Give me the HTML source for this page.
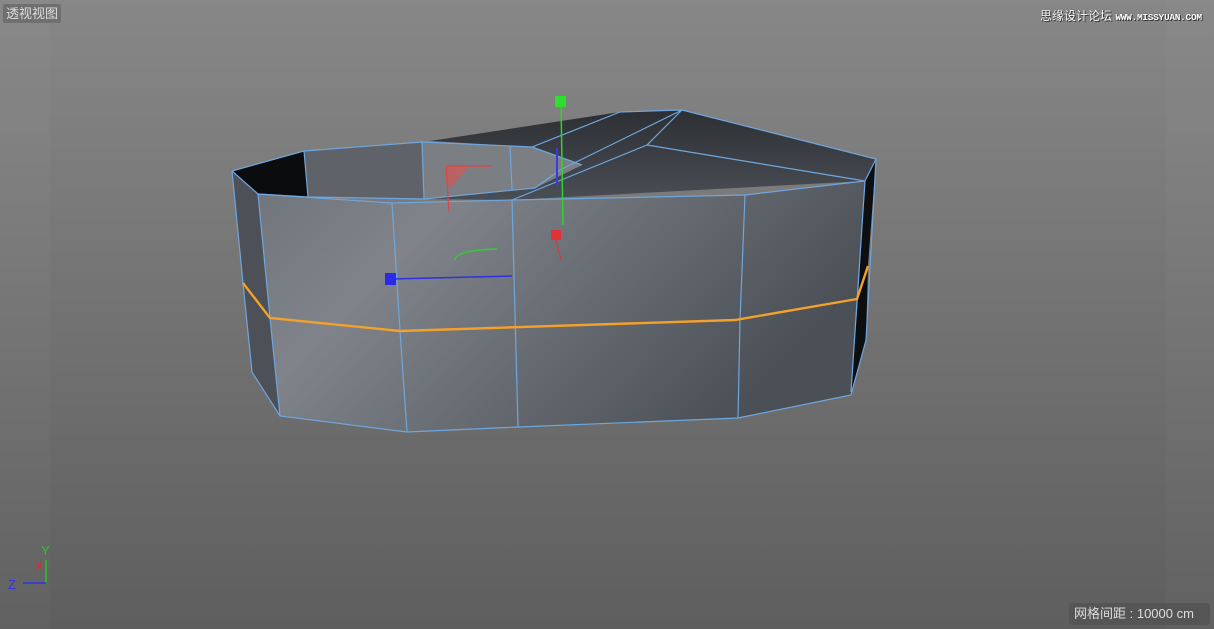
<!DOCTYPE html>
<html><head><meta charset="utf-8"><style>
html,body{margin:0;padding:0}
body{width:1214px;height:629px;overflow:hidden;position:relative;background:linear-gradient(#878787,#5e5e5e);font-family:"Liberation Sans","Noto Sans CJK SC",sans-serif}
.lp{position:absolute;left:0;top:0;width:50px;height:629px;background:rgba(255,255,255,0.025)}
.rp{position:absolute;right:0;top:0;width:48px;height:629px;background:rgba(255,255,255,0.025)}
.tl{position:absolute;left:3px;top:4px;padding:0 3px;height:19px;line-height:19px;font-size:13px;color:#ddd;background:#6f6f6f;border-radius:2px}
.wm{position:absolute;left:1040px;top:7px;font-size:12px;color:#fff;text-shadow:0 0 1px #333,1px 1px 0 #333;letter-spacing:0}
.wm span{font-family:"Liberation Mono",monospace;font-size:9.5px;font-weight:bold;letter-spacing:-0.3px}
.br{position:absolute;left:1069px;top:603px;width:141px;height:22px;line-height:22px;background:#555;border-radius:3px;color:#ddd;font-size:13px;padding-left:5px;box-sizing:border-box}
svg{position:absolute;left:0;top:0}
</style></head><body>
<div class="lp"></div><div class="rp"></div>
<svg width="1214" height="629">
<defs>
<linearGradient id="fr" x1="0" y1="0" x2="1" y2="0.4">
<stop offset="0" stop-color="#70747b"/><stop offset="0.3" stop-color="#80848a"/><stop offset="0.7" stop-color="#61656c"/><stop offset="1" stop-color="#4b4f56"/></linearGradient>
<linearGradient id="tp" x1="0" y1="0" x2="0" y2="1"><stop offset="0" stop-color="#2c2f33"/><stop offset="1" stop-color="#4a4e55"/></linearGradient>
</defs>
<polygon points="430,141 620,112 682,110 876,159 865,181 512,200 424,199 535,188 582,165 532,147" fill="url(#tp)"/>
<polygon points="422,142 510,146 532,147 582,165 535,188 424,199" fill="#7b7e83"/>
<polygon points="304,151 422,142 424,199 308,197" fill="#5f6369"/>
<polygon points="232,171 304,151 308,197 258,194" fill="#0b0c0d"/>
<polygon points="232,171 258,194 270,318 280,416 252,372 243,283" fill="#4d5157"/>
<polygon points="258,194 392,203 512,200 745,195 865,181 858,299 851,395 738,418 518,427 407,432 280,416 270,318" fill="url(#fr)"/>
<polygon points="876,159 865,181 858,299 851,392 866,340 868,265" fill="#0d0e10"/>
<g stroke="#6fa6de" stroke-width="1.2" fill="none">
<polyline points="232,171 304,151 422,142 510,146 532,147 620,112 682,110 876,159 865,181 745,195 512,200 392,203 258,194 232,171"/>
<polyline points="258,194 308,197 424,199 535,188"/>
<line x1="304" y1="151" x2="308" y2="197"/><line x1="422" y1="142" x2="424" y2="199"/><line x1="510" y1="146" x2="512" y2="190"/>
<polyline points="532,147 582,165"/><polyline points="682,110 647,145 512,200"/><polyline points="647,145 865,181"/><polyline points="682,110 560,170 535,188"/>
<polyline points="232,171 243,283 252,372 280,416 407,432 518,427 738,418 851,395 866,340 876,159"/>
<polyline points="258,194 270,318 280,416"/><polyline points="392,203 400,331 407,432"/><polyline points="512,200 518,427"/><polyline points="745,195 740,320 738,418"/><line x1="865" y1="181" x2="851" y2="392"/>
</g>
<polyline points="243,283 270,318 400,331 735,320 857,299 868,266" stroke="#f3a12a" stroke-width="2.4" fill="none"/>
<polygon points="446,166 469,166 449,190" fill="rgba(225,80,80,0.6)"/>
<polyline points="492,166 446,166 449,212" stroke="#e04545" stroke-width="1.2" fill="none"/>
<line x1="561" y1="102" x2="563" y2="225" stroke="#2ed52e" stroke-width="1.5"/>
<rect x="555" y="96" width="11" height="11" fill="#2ee02e"/>
<line x1="557" y1="148" x2="557" y2="186" stroke="#3a3ae0" stroke-width="2"/>
<rect x="551" y="230" width="10" height="10" fill="#e03333"/>
<line x1="556" y1="240" x2="561" y2="260" stroke="#e03333" stroke-width="1"/>
<line x1="391" y1="279" x2="512" y2="276" stroke="#3030e0" stroke-width="1.5"/>
<rect x="385" y="273" width="11" height="12" fill="#2a2ae8"/>
<path d="M455,260 Q456,250 497,249" stroke="#30d030" stroke-width="1.5" fill="none"/>
<line x1="46" y1="560" x2="46" y2="583" stroke="#2ec02e" stroke-width="1.5"/>
<line x1="23" y1="583" x2="46" y2="583" stroke="#3030e0" stroke-width="1.5"/>
<text x="41" y="555" fill="#33c033" font-size="13" font-family="Liberation Sans">Y</text>
<text x="35" y="570" fill="#d03030" font-size="13" font-family="Liberation Sans">X</text>
<text x="8" y="589" fill="#3535e0" font-size="13" font-family="Liberation Sans">Z</text>
</svg>
<div class="tl">透视视图</div>
<div class="wm">思缘设计论坛 <span>WWW.MISSYUAN.COM</span></div>
<div class="br">网格间距 : 10000 cm</div>
</body></html>
